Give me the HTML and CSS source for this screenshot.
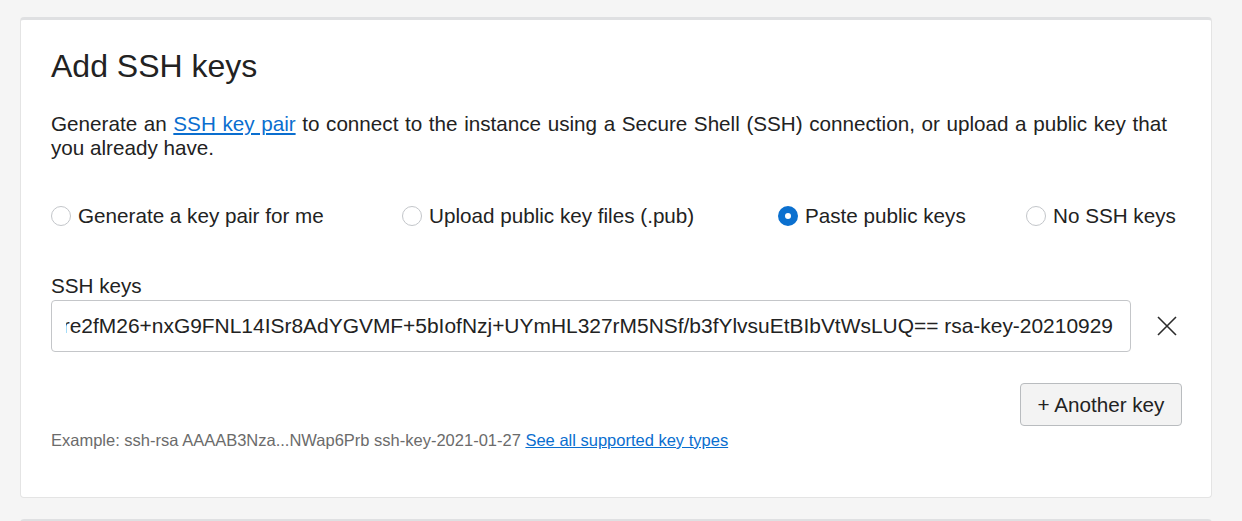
FILE: index.html
```html
<!DOCTYPE html>
<html lang="en">
<head>
<meta charset="utf-8">
<title>Add SSH keys</title>
<link rel="stylesheet" href="styles.css">
</head>
<body>
<main class="page">
  <section class="card">
    <h2 class="title">Add SSH keys</h2>
    <p class="intro">Generate an <a href="#" class="link">SSH key pair</a> to connect to the instance using a Secure Shell (SSH) connection, or upload a public key that you already have.</p>

    <div class="radios" role="radiogroup">
      <label class="radio"><span class="dot"></span><span>Generate a key pair for me</span></label>
      <label class="radio"><span class="dot"></span><span>Upload public key files (.pub)</span></label>
      <label class="radio"><span class="dot checked"></span><span>Paste public keys</span></label>
      <label class="radio"><span class="dot"></span><span>No SSH keys</span></label>
    </div>

    <div class="field-label">SSH keys</div>
    <div class="key-row">
      <div class="key-input">
        <div class="key-clip"><span class="key-text">AAAAB3NzaC1yc2EAAAADAQABAAABAQDr</span><span class="key-text">e2fM26+nxG9FNL14ISr8AdYGVMF+5bIofNzj+UYmHL327rM5NSf/b3fYlvsuEtBIbVtWsLUQ== rsa-key-20210929</span></div>
      </div>
      <div class="remove">
        <svg width="20" height="20" viewBox="0 0 20 20" aria-hidden="true"><path d="M1 1 L19 19 M19 1 L1 19" stroke="#2b2b2b" stroke-width="1.6" fill="none"/></svg>
      </div>
    </div>

    <div class="actions">
      <button class="btn" type="button">+ Another key</button>
    </div>

    <p class="hint">Example: ssh-rsa AAAAB3Nza...NWap6Prb ssh-key-2021-01-27 <a href="#" class="link">See all supported key types</a></p>
  </section>
  <section class="card next"></section>
</main>
</body>
</html>
```

FILE: styles.css
```css
html, body {
  margin: 0;
  padding: 0;
  background: #f5f5f5;
  font-family: "Liberation Sans", Arial, sans-serif;
  color: #1f1f1f;
}

.page {
  padding: 17px 0 0 20px;
  height: 521px;
  box-sizing: border-box;
  overflow: hidden;
}

.card {
  width: 1192px;
  box-sizing: border-box;
  background: #fff;
  border: 1px solid #e4e4e4;
  border-top: 3px solid #dfe0e2;
  border-radius: 4px;
  padding: 27px 29px 47px 30px;
}

.card.next {
  margin-top: 21px;
  height: 40px;
  padding: 0;
}

.title {
  margin: 0;
  font-size: 32px;
  line-height: 38px;
  font-weight: normal;
  color: #222;
}

.intro {
  margin: 27px 0 0;
  width: 1116px;
  text-align: justify;
  font-size: 20.66px;
  line-height: 24px;
  color: #222;
}

.link {
  color: #0a6ecf;
  text-decoration: underline;
}

.radios {
  margin-top: 44px;
  display: grid;
  grid-template-columns: 351px 376px 248px 1fr;
  font-size: 20.66px;
  line-height: 24px;
  color: #222;
}

.radio {
  display: flex;
  align-items: center;
  gap: 7px;
}

.dot {
  width: 20px;
  height: 20px;
  box-sizing: border-box;
  border: 1px solid #c3c6ca;
  border-radius: 50%;
  background: #fff;
  flex: none;
}

.dot.checked {
  border: 7px solid #0b70cf;
  background: #fff;
}

.field-label {
  margin-top: 46px;
  font-size: 20.66px;
  line-height: 24px;
  color: #222;
}

.key-row {
  margin-top: 2px;
  display: flex;
  align-items: center;
}

.key-input {
  flex: 1;
  min-width: 0;
  height: 52px;
  box-sizing: border-box;
  border: 1px solid #c4c6c9;
  border-radius: 4px;
  padding: 0 17px 0 14px;
  display: flex;
  align-items: center;
}

.key-clip {
  flex: 1;
  min-width: 0;
  display: flex;
  justify-content: flex-end;
  overflow: hidden;
}

.key-text {
  white-space: nowrap;
  font-size: 20.94px;
  line-height: 24px;
  color: #222;
  flex: none;
}

.remove {
  width: 51px;
  flex: none;
  padding-left: 26px;
  box-sizing: border-box;
  display: flex;
  align-items: center;
}

.remove svg {
  display: block;
}

.actions {
  margin-top: 31px;
  display: flex;
  justify-content: flex-end;
}

.btn {
  font-family: "Liberation Sans", Arial, sans-serif;
  font-size: 20.66px;
  line-height: 23px;
  padding: 9px 10px;
  color: #222;
  background: #f3f3f3;
  border: 1px solid #b9bcbf;
  border-radius: 4px;
  width: 162px;
}

.hint {
  margin: 4px 0 0;
  font-size: 16.5px;
  line-height: 20px;
  color: #6b6b6b;
}
```
